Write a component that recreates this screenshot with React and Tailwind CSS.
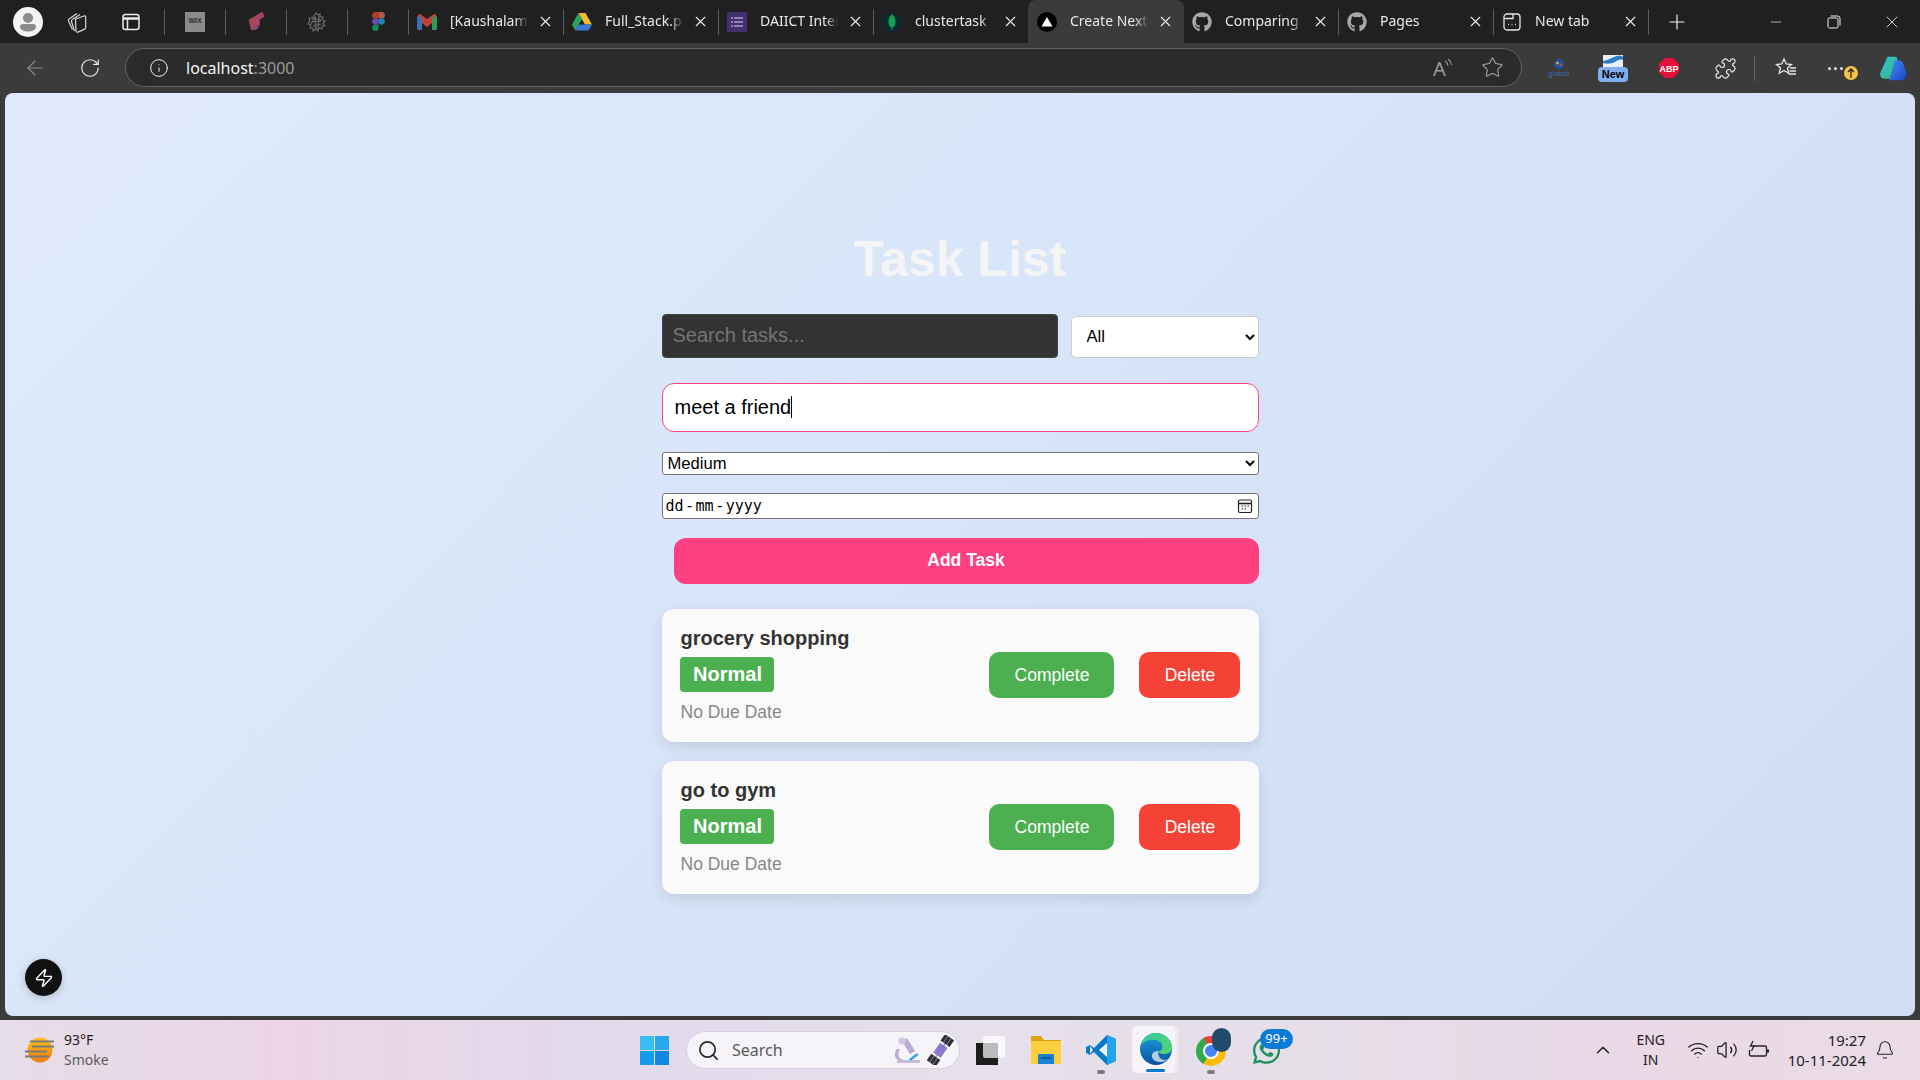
import React from 'react'
import { X, Plus, Minus, ArrowLeft, RotateCw, Info, Star, Puzzle, Bell, Wifi, Volume2, ChevronUp, Search, Zap } from 'lucide-react'
import { FaGithub, FaWhatsapp } from 'react-icons/fa'

const uiFont = "font-['Noto_Sans',sans-serif]"

// tab strip icons
const ProfileIcon = () => (
  <svg width="30" height="30" viewBox="0 0 30 30">
    <circle cx="15" cy="15" r="15" fill="#f4f4f4" />
    <circle cx="15" cy="11" r="5" fill="#8c8c8c" />
    <path d="M7 19.500c0-1.500 1-2.500 2.500-2.500h11c1.500 0 2.500 1 2.500 2.500 0 3.500-3.500 5-8 5s-8-1.500-8-5z" fill="#8c8c8c" />
  </svg>
)

const WorkspacesIcon = () => (
  <svg width="22" height="22" viewBox="0 0 22 22" fill="none" stroke="#d8d8d8" strokeWidth="1.200">
    <path d="M6.500 18.500L2.500 10c-.4-1 0-1.800.8-2.200L11 2.500" />
    <path d="M8.500 20L5.500 10.500c-.3-1 0-1.700.8-2L14 3.500" />
    <path d="M9.500 8l8.500-3c1-.3 1.700.2 1.700 1v10.500c0 .8-.4 1.300-1 1.600l-6.700 3c-1 .4-1.800-.1-2-1z" />
  </svg>
)

const VerticalTabsIcon = () => (
  <svg width="20" height="20" viewBox="0 0 20 20" fill="none" stroke="#ececec" strokeWidth="1.500">
    <rect x="2" y="2.500" width="16" height="15" rx="2.500" />
    <path d="M2 6.500h16" strokeWidth="2.500" />
    <path d="M6.500 6.500v11" />
  </svg>
)

const WixIcon = () => (
  <div className="w-[20px] h-[20px] bg-[#8a8a8a] flex items-center justify-center text-[7px] font-bold text-[#2a2a2a] font-['Liberation_Sans',sans-serif]">
    WIX
  </div>
)

const PinkIcon = () => (
  <svg width="17" height="20" viewBox="0 0 17 20">
    <path d="M1 7.500L13 .500c1-.5 2 0 2.500 1L16 5l-4.500 2.500 .5 5.500-7 5c-1 .5-2 0-2.300-1L1 9.500c-.2-1 0-1.500 0-2z" fill="#a8455f" />
    <path d="M5 17l5-3.500 1 2-4 3z" fill="#6d4a88" />
  </svg>
)

const InkIcon = () => (
  <svg width="20" height="20" viewBox="0 0 20 20" fill="none" stroke="#6e6e6e" strokeWidth="1.100">
    <path d="M9 1l2 2 2-1v3l3 0-1 3 3 1-2 2 2 3-3 0 0 3-3-1-1 3-2-2-3 2v-3l-3 0 1-3-3-1 2-3-1-3 3 0z" />
    <path d="M5 6l9 2M5 10l9-1M6 14l8-2M8 4l1 13M12 4l-1 13M4 12l4-7" />
  </svg>
)

const FigmaIcon = () => (
  <svg width="13" height="19" viewBox="0 0 14 21">
    <path d="M3.500 0H7v7H3.500a3.500 3.500 0 010-7z" fill="#b23f22" />
    <path d="M7 0h3.500a3.500 3.500 0 010 7H7z" fill="#b65c4b" />
    <path d="M3.500 7H7v7H3.500a3.500 3.500 0 010-7z" fill="#7243a8" />
    <circle cx="10.500" cy="10.500" r="3.500" fill="#1c87b0" />
    <path d="M3.500 14H7v3.500a3.500 3.500 0 11-3.500-3.500z" fill="#0d8f5d" />
  </svg>
)

const GmailIcon = () => (
  <svg width="20" height="16" viewBox="0 0 20 16">
    <path d="M0 3l2-2 3 1v14H1.500A1.500 1.500 0 010 14.500z" fill="#3f6fb5" />
    <path d="M20 3l-2-2-3 1v14h3.500a1.500 1.500 0 001.500-1.500z" fill="#2f9a58" />
    <path d="M1 1.500L10 8.500l9-7-.5-1.500-1.500 0L10 5 3 0 1.500 0z" fill="#c5433a" />
    <path d="M5 4l5 4.500L15 4v5l-5 4-5-4z" fill="#c5433a" />
  </svg>
)

const DriveIcon = () => (
  <svg width="20" height="18" viewBox="0 0 20 18">
    <path d="M6.500 0h7L20 11.500h-7z" fill="#f2bb2c" />
    <path d="M6.500 0L0 11.500 3.300 17.500 10 6z" fill="#2da160" />
    <path d="M3.300 17.500h13.400l3.300-6H6.700z" fill="#3d78d8" />
  </svg>
)

const FormsIcon = () => (
  <div className="w-[20px] h-[20px] bg-[#43306f] flex flex-col justify-center gap-[2px] px-[4px]">
    {[0, 1, 2].map(i => (
      <div key={i} className="flex gap-[1px]">
        <div className="w-[2px] h-[2px] bg-[#8f83ad]" />
        <div className="flex-1 h-[2px] bg-[#8f83ad]" />
      </div>
    ))}
  </div>
)

const MongoIcon = () => (
  <svg width="20" height="20" viewBox="0 0 20 20">
    <circle cx="10" cy="10" r="10" fill="#0c2a2f" />
    <path d="M10 2c3 3 4 6 3.500 9-.3 2-1.500 3.500-3 4.500V18h-1v-2.500c-1.500-1-2.700-2.500-3-4.500C6 8 7 5 10 2z" fill="#12a150" />
  </svg>
)

const NextIcon = () => (
  <svg width="20" height="20" viewBox="0 0 20 20">
    <circle cx="10" cy="10" r="10" fill="#000" />
    <path d="M10 5l5.500 9.500h-11z" fill="#fff" />
  </svg>
)

const GithubIcon = () => <FaGithub size={20} color="#a8a8a8" />

const NewTabIcon = () => (
  <svg width="20" height="20" viewBox="0 0 20 20" fill="none" stroke="#e6e6e6" strokeWidth="1.300">
    <rect x="2" y="2" width="16" height="16" rx="3" />
    <path d="M2 6.500h9V2" />
    <path d="M6 12.500h.8M9.600 12.500h.8M13.200 12.500h.8" strokeWidth="1.700" />
  </svg>
)

const Separator = () => <div className="w-px h-[26px] bg-[#5c5c5c] shrink-0" />

const PinnedTab = ({ children }) => (
  <div className="w-[60px] h-full flex items-center justify-center shrink-0">{children}</div>
)

const Tab = ({ icon, title, active }) => (
  <div className={active
    ? 'relative w-[156px] h-full flex items-center pl-[9px] shrink-0 bg-[#3b3b3b] rounded-t-lg'
    : 'w-[154px] h-full flex items-center pl-[8px] shrink-0'}
  >
    <div className="w-[20px] flex items-center justify-center shrink-0">{icon}</div>
    <div className="ml-[13px] -mt-[2px] w-[80px] overflow-hidden whitespace-nowrap text-[14px] leading-[20px] text-[#e8e8e8] [mask-image:linear-gradient(to_right,black_82%,transparent_98%)]">
      {title}
    </div>
    <X size={17} strokeWidth={1.500} color="#f0f0f0" className="ml-[7px] shrink-0" />
  </div>
)

const TabBar = () => (
  <div className={`h-[43px] shrink-0 bg-[#202020] flex items-center ${uiFont}`}>
    <div className="w-[56px] flex justify-center shrink-0"><ProfileIcon /></div>
    <div className="w-[42px] flex justify-center shrink-0"><WorkspacesIcon /></div>
    <div className="w-[66px] flex justify-center shrink-0"><VerticalTabsIcon /></div>
    <Separator />
    <PinnedTab><WixIcon /></PinnedTab>
    <Separator />
    <PinnedTab><PinkIcon /></PinnedTab>
    <Separator />
    <PinnedTab><InkIcon /></PinnedTab>
    <Separator />
    <PinnedTab><FigmaIcon /></PinnedTab>
    <Separator />
    <Tab icon={<GmailIcon />} title="[Kaushalam] Inbox" />
    <Separator />
    <Tab icon={<DriveIcon />} title="Full_Stack.pdf" />
    <Separator />
    <Tab icon={<FormsIcon />} title="DAIICT Internship" />
    <Separator />
    <Tab icon={<MongoIcon />} title="clustertask | Data" />
    <Tab icon={<NextIcon />} title="Create Next App" active />
    <Tab icon={<GithubIcon />} title="Comparing main" />
    <Separator />
    <Tab icon={<GithubIcon />} title="Pages" />
    <Separator />
    <Tab icon={<NewTabIcon />} title="New tab" />
    <Separator />
    <div className="w-[56px] flex justify-center shrink-0">
      <Plus size={24} strokeWidth={1.200} color="#f0f0f0" />
    </div>
    <div className="ml-auto flex items-center">
      <div className="w-[58px] flex justify-center"><Minus size={16} strokeWidth={1} color="#f0f0f0" /></div>
      <div className="w-[58px] flex justify-center">
        <svg width="14" height="14" viewBox="0 0 14 14" fill="none" stroke="#f0f0f0" strokeWidth="1">
          <rect x="1" y="3" width="10" height="10" rx="1.500" />
          <path d="M3.500 1h7a2.500 2.500 0 012.500 2.500v7" />
        </svg>
      </div>
      <div className="w-[57px] flex justify-center"><X size={20} strokeWidth={1} color="#f0f0f0" /></div>
    </div>
  </div>
)

// toolbar icons
const ReadAloudIcon = () => (
  <svg width="24" height="24" viewBox="0 0 24 24" fill="none" stroke="#9a9a9a" strokeWidth="1.100">
    <text x="2" y="20" fontSize="20" fill="#9a9a9a" stroke="none" fontFamily="Noto Sans">A</text>
    <path d="M14 5c1.500 1 2.500 2.500 3 4.500M17 3c2 1.500 3.300 3.500 3.800 6" />
  </svg>
)

const GrabzitIcon = () => (
  <div className="flex flex-col items-center w-[32px]">
    <svg width="10" height="10" viewBox="0 0 10 10">
      <circle cx="5" cy="5" r="5" fill="#24539c" />
      <circle cx="3.500" cy="4" r="1.300" fill="#e5b92e" />
      <circle cx="6.500" cy="6" r="1.300" fill="#c4473a" />
    </svg>
    <span className="text-[7px] leading-[9px] text-[#3f6ab0] font-['Liberation_Sans',sans-serif]">grabzit</span>
  </div>
)

const NewExtensionIcon = () => (
  <div className="flex flex-col items-center w-[30px]">
    <svg width="20" height="13" viewBox="0 0 20 13">
      <rect width="20" height="13" fill="#e8f1fa" />
      <path d="M0 6c6-1 10-4 14-5 3-.5 5 0 6 1v3c-3-1-5 0-8 2-4 2-8 2-12 1z" fill="#2d7cc4" />
    </svg>
    <div className="w-[30px] h-[15px] -mt-[1px] rounded-[4px] bg-[#82aef0] flex items-center justify-center text-[11px] font-bold text-black font-['Liberation_Sans',sans-serif]">
      New
    </div>
  </div>
)

const AbpIcon = () => (
  <svg width="20" height="20" viewBox="0 0 20 20">
    <path d="M6 0h8l6 6v8l-6 6H6l-6-6V6z" fill="#e8103a" />
    <text x="10" y="13.500" textAnchor="middle" fontSize="9" fontWeight="700" fill="#fff" fontFamily="Liberation Sans">ABP</text>
  </svg>
)

const FavouritesIcon = () => (
  <svg width="22" height="22" viewBox="0 0 22 22" fill="none" stroke="#e6e6e6" strokeWidth="1.300">
    <path d="M9 2l2.300 5 5.200.5-4 3.500 1.200 5.200L9 13.500 4.300 16.200 5.500 11l-4-3.500L6.700 7z" />
    <path d="M15 11h6M14.500 14h6.500M13.500 17h7.500" />
  </svg>
)

const MoreIcon = () => (
  <div className="relative w-[24px] h-[24px] flex items-center">
    <div className="flex gap-[3px]">
      <div className="w-[3px] h-[3px] rounded-full bg-[#e6e6e6]" />
      <div className="w-[3px] h-[3px] rounded-full bg-[#e6e6e6]" />
      <div className="w-[3px] h-[3px] rounded-full bg-[#e6e6e6]" />
    </div>
    <div className="absolute left-[16px] top-[10px] w-[14px] h-[14px] rounded-full bg-[#f6c445] flex items-center justify-center">
      <svg width="8" height="10" viewBox="0 0 8 10" fill="none" stroke="#222" strokeWidth="1.300">
        <path d="M4 10V1M1 4l3-3 3 3" />
      </svg>
    </div>
  </div>
)

const CopilotIcon = () => (
  <svg width="30" height="27" viewBox="0 0 32 30">
    <defs>
      <linearGradient id="copA" x1="0" y1="0" x2="1" y2="1">
        <stop offset="0" stopColor="#27c4e8" />
        <stop offset="1" stopColor="#3fb56a" />
      </linearGradient>
      <linearGradient id="copB" x1="0" y1="0" x2="1" y2="1">
        <stop offset="0" stopColor="#3f8df0" />
        <stop offset="1" stopColor="#1a46c8" />
      </linearGradient>
    </defs>
    <path d="M10 2h8c1.500 0 2.500 1 3 2.500L15 25c-.5 1-1 1.500-2 1.500H7c-4 0-6-3-5-7z" fill="url(#copA)" />
    <path d="M18 6h5c2 0 3.500 1 4 3l4 11c.5 4-2 8-6 8H14c-1.500 0-2-1-1.500-2.500z" fill="url(#copB)" />
  </svg>
)

const Toolbar = () => (
  <div className={`h-[50px] shrink-0 bg-[#3b3b3b] flex items-center ${uiFont}`}>
    <div className="w-[70px] flex justify-center shrink-0"><ArrowLeft size={24} strokeWidth={1.100} color="#8b8b8b" /></div>
    <div className="w-[40px] flex justify-center shrink-0"><RotateCw size={22} strokeWidth={1.300} color="#eeeeee" /></div>
    <div className="ml-[15px] w-[1397px] h-[39px] -mt-[1px] shrink-0 bg-[#2b2b2b] border border-[#636363] rounded-full flex items-center">
      <div className="w-[60px] pl-[7px] flex justify-center shrink-0 -ml-[1px]"><Info size={20} strokeWidth={1.200} color="#f0f0f0" /></div>
      <div className="ml-[1px] text-[16px] leading-none text-[#f4f4f4]">
        localhost<span className="text-[#9c9c9c]">:3000</span>
      </div>
      <div className="ml-auto flex items-center pr-[14px]">
        <div className="w-[69px] flex justify-center"><ReadAloudIcon /></div>
        <div className="w-[30px] flex justify-center"><Star size={23} strokeWidth={1.100} color="#a8a8a8" /></div>
      </div>
    </div>
    <div className="w-[21px] shrink-0" />
    <div className="w-[32px] flex justify-center shrink-0"><GrabzitIcon /></div>
    <div className="ml-[22px] w-[32px] flex justify-center shrink-0"><NewExtensionIcon /></div>
    <div className="ml-[24px] w-[32px] flex justify-center shrink-0"><AbpIcon /></div>
    <div className="ml-[24px] w-[32px] flex justify-center shrink-0"><Puzzle size={23} strokeWidth={1.200} color="#eeeeee" /></div>
    <div className="ml-[13px] w-px h-[25px] bg-[#666666] shrink-0" />
    <div className="ml-[15px] w-[32px] flex justify-center shrink-0"><FavouritesIcon /></div>
    <div className="ml-[22px] w-[32px] flex justify-center shrink-0"><MoreIcon /></div>
    <div className="ml-[21px] w-[32px] flex justify-center shrink-0"><CopilotIcon /></div>
  </div>
)

// the task list page
const TaskCard = ({ title }) => (
  <div className="flex items-center justify-between bg-[#fafafa] rounded-[12px] pl-[18px] pr-[19px] pt-[18px] pb-[20px] mb-[19px] shadow-[0_5px_14px_rgba(0,0,0,0.1)]">
    <div>
      <div className="ml-[1px] text-[20px] leading-[23px] font-bold text-[#333333]">{title}</div>
      <div className="mt-[7px] w-[94px] h-[35px] pl-[2px] pb-[2px] rounded-[4px] bg-[#4caf50] flex items-center justify-center text-[20px] font-bold text-white">
        Normal
      </div>
      <div className="ml-[1px] mt-[10px] text-[17.500px] leading-[20px] text-[#888888]">No Due Date</div>
    </div>
    <div className="flex items-center gap-[25px]">
      <button className="w-[125px] h-[46px] pl-[2px] pt-[2px] rounded-[10px] bg-[#4caf50] text-[17.500px] text-white">Complete</button>
      <button className="w-[101px] h-[46px] pl-[2px] pt-[2px] rounded-[10px] bg-[#f44336] text-[17.500px] text-white">Delete</button>
    </div>
  </div>
)

const TaskPage = () => (
  <div className="relative flex-1 min-h-0 rounded-[8px] bg-[linear-gradient(135deg,#e0eafc,#cfdef3)] pt-[138px] font-['Liberation_Sans',sans-serif]">
    <div className="w-[597px] mx-auto">
      <h1 className="text-[50px] leading-[56px] font-bold text-center text-[#f5f5f5]">Task List</h1>

      <div className="mt-[27px] flex items-end justify-between">
        <input
          readOnly
          placeholder="Search tasks..."
          className="w-[396px] h-[44px] px-[10px] pb-[2px] rounded-[4px] bg-[#333333] border border-[#444444] text-[20px] text-white placeholder:text-[#757575] outline-none"
        />
        <select defaultValue="All" className="w-[188px] h-[42px] pl-[11px] pr-[3px] pb-[2px] rounded-[5px] bg-white border border-[#cccccc] text-[16.600px] text-black outline-none">
          <option>All</option>
          <option>Normal</option>
        </select>
      </div>

      <div className="mt-[25px] h-[49px] pb-[2px] rounded-[12px] bg-white border border-[#ff4081] pl-[12px] flex items-center text-[20px] text-black">
        <span>meet a friend</span>
        <span className="w-px h-[22px] bg-black" />
      </div>

      <select defaultValue="Medium" className="block mt-[20px] w-full h-[23px] pl-[1px] pr-[3px] rounded-[3px] bg-white border border-[#767676] text-[16.600px] text-black outline-none">
        <option>Low</option>
        <option>Medium</option>
        <option>High</option>
      </select>

      <div className="mt-[18px] h-[26px] rounded-[3px] bg-white border border-[#767676] pl-[3px] pr-[5px] flex items-center justify-between text-black">
        <span className="flex gap-[1.500px] text-[15px] font-['DejaVu_Sans_Mono',monospace]"><span>dd</span><span>-</span><span>mm</span><span>-</span><span>yyyy</span></span>
        <svg width="16" height="16" viewBox="0 0 16 16" fill="none" stroke="#222" strokeWidth="1.200">
          <rect x="1.500" y="2" width="13" height="12.500" rx="1.500" />
          <path d="M1.500 5.500h13" strokeWidth="1.600" />
          <path d="M4.500 8h1.500M7.500 8H9M10.500 8H12M4.500 11h1.500M7.500 11H9" />
        </svg>
      </div>

      <button className="block mt-[19px] ml-[12px] w-[585px] h-[46px] pb-[2px] rounded-[12px] bg-[#ff4081] text-[17.500px] font-bold text-white">
        Add Task
      </button>

      <div className="mt-[25px]">
        <TaskCard title="grocery shopping" />
        <TaskCard title="go to gym" />
      </div>
    </div>

    {/* next dev indicator */}
    <div className="absolute left-[20px] bottom-[20px] w-[37px] h-[37px] rounded-full bg-[#111111] flex items-center justify-center shadow-[0_2px_10px_rgba(0,0,0,0.2)]">
      <Zap size={20} strokeWidth={1.700} color="#ffffff" />
    </div>
  </div>
)

// taskbar icons
const WeatherIcon = () => (
  <svg width="32" height="28" viewBox="0 0 32 28">
    <defs>
      <linearGradient id="sun" x1="0" y1="0" x2="0" y2="1">
        <stop offset="0" stopColor="#fdc11c" />
        <stop offset="1" stopColor="#ee7d08" />
      </linearGradient>
    </defs>
    <circle cx="16" cy="14" r="12.500" fill="url(#sun)" />
    <path d="M6 5.500h24M8 10.500h22M1 15.500h22M1 20.500h24" stroke="#7a7a7a" strokeWidth="2.200" />
  </svg>
)

const WindowsIcon = () => (
  <div className="grid grid-cols-2 gap-[1px] w-[29px] h-[29px]">
    <div className="bg-[#38bdf4]" />
    <div className="bg-[#26a9ef]" />
    <div className="bg-[#159bec]" />
    <div className="bg-[#0f88e3]" />
  </div>
)

const MicroscopeIcon = () => (
  <svg width="28" height="28" viewBox="0 0 28 28">
    <path d="M9 5l5-3 8 13-5 3z" fill="#b9abd2" />
    <circle cx="9" cy="5" r="3.500" fill="#cfc7e2" />
    <path d="M4 24h23v3H4z" fill="#c5bbdc" />
    <path d="M7 13c-3 4-2 10 4 11H5c-4-2-4-8-1-11z" fill="#b9abd2" />
    <path d="M16 23l8-6 1.500 2-8 6z" fill="#3aa5e8" />
  </svg>
)

const SatelliteIcon = () => (
  <svg width="28" height="30" viewBox="0 0 28 30">
    <g transform="rotate(35 14 15)">
      <rect x="10" y="9" width="9" height="12" fill="#8b78c9" />
      <rect x="9" y="-1" width="11" height="8" fill="#2f2f3a" />
      <rect x="9" y="23" width="11" height="8" fill="#2f2f3a" />
      <path d="M14.500 7v2M14.500 21v2M12.500 -1v8M16.500 -1v8M12.500 23v8M16.500 23v8" stroke="#7d7d90" strokeWidth="1" />
    </g>
  </svg>
)

const TaskViewIcon = () => (
  <div className="relative w-[29px] h-[29px]">
    <div className="absolute left-0 bottom-0 w-[22px] h-[22px] bg-[#1d1d1d]" />
    <div className="absolute right-0 top-0 w-[22px] h-[22px] bg-white/70 rounded-[2px]" />
  </div>
)

const ExplorerIcon = () => (
  <svg width="30" height="30" viewBox="0 0 30 30">
    <path d="M0 2c0-.5.500-1 1-1h9l3 4h17v3H0z" fill="#e0a20f" />
    <path d="M0 6h29c.5 0 1 .5 1 1v21c0 .5-.5 1-1 1H1c-.5 0-1-.5-1-1z" fill="#fbcf3f" />
    <path d="M7 20c0-.5.500-1 1-1h14c.5 0 1 .5 1 1v9H7z" fill="#1a82d4" />
    <path d="M10 23h10" stroke="#0d4f92" strokeWidth="1.500" />
  </svg>
)

const VsCodeIcon = () => (
  <svg width="30" height="30" viewBox="0 0 30 30">
    <path d="M21 0l9 4v22l-9 4L8 17l-4 3-4-2v-6l4-2 4 3z" fill="#0a7ac8" />
    <path d="M21 0l9 4v22l-9 4z" fill="#22a3ee" />
    <path d="M21 8v14l-8-7z" fill="#eef1f5" />
    <path d="M4 11l3 4-3 4z" fill="#eef1f5" />
  </svg>
)

const EdgeIcon = () => (
  <svg width="32" height="32" viewBox="0 0 32 32">
    <defs>
      <linearGradient id="edgeA" x1="0" y1="0" x2="1" y2="1">
        <stop offset="0" stopColor="#34c7a4" />
        <stop offset="1" stopColor="#58d66a" />
      </linearGradient>
      <linearGradient id="edgeB" x1="0" y1="0" x2="0" y2="1">
        <stop offset="0" stopColor="#1aa4e0" />
        <stop offset="1" stopColor="#0a4f9e" />
      </linearGradient>
    </defs>
    <circle cx="16" cy="16" r="16" fill="url(#edgeB)" />
    <path d="M1 12C3 4 9 0 16 0c9 0 16 7 16 14 0 5-4 7-8 7-3 0-6-1-6-3 3 0 5-2 4-6C21 6 7 4 1 12z" fill="url(#edgeA)" />
    <path d="M18 18c-3 0-7 2-6 6 .8 3 4 5 9 5 3 0 5-1 7-3-4 2-10 1-10-8z" fill="#e9eef4" opacity="0.750" />
  </svg>
)

const ChromeIcon = () => (
  <div className="relative w-[30px] h-[32px]">
    <div className="absolute left-0 bottom-0 w-[30px] h-[30px] rounded-full bg-[conic-gradient(from_-30deg,#ea4335_0deg_120deg,#fbbc05_120deg_240deg,#34a853_240deg_360deg)] flex items-center justify-center">
      <div className="w-[16px] h-[16px] rounded-full bg-[#4285f4] border-[2px] border-white" />
    </div>
    <div className="absolute left-[16px] -top-[6px] w-[19px] h-[24px] rounded-full bg-[#23496b]" />
  </div>
)

const Taskbar = () => (
  <div className={`h-[60px] shrink-0 flex items-center bg-[linear-gradient(90deg,#e5dde8,#ecd5e5_15%,#e2d9ec_30%,#e6e0ec_50%,#e4dfe8_65%,#ead8e6_85%,#ebdce6)] ${uiFont}`}>
    <div className="w-[640px] shrink-0 flex items-center pl-[24px]">
      <WeatherIcon />
      <div className="ml-[8px] text-[14px] leading-[20px]">
        <div className="text-[#1c1c1c]">93°F</div>
        <div className="text-[#5c5c5c]">Smoke</div>
      </div>
    </div>

    <WindowsIcon />
    <div className="ml-[17px] w-[274px] h-[38px] rounded-full bg-[#f6f3f9] border border-[#d6cfe0] flex items-center shrink-0">
      <Search size={23} strokeWidth={1.800} color="#2a2a2a" className="ml-[10px]" />
      <span className="ml-[12px] text-[16px] leading-none text-[#5a5a5a]">Search</span>
      <div className="ml-auto flex items-center pr-[5px]">
        <MicroscopeIcon />
        <div className="ml-[5px]"><SatelliteIcon /></div>
      </div>
    </div>
    <div className="ml-[16px]"><TaskViewIcon /></div>
    <div className="ml-[26px]"><ExplorerIcon /></div>
    <div className="relative ml-[25px]">
      <VsCodeIcon />
      <div className="absolute left-[11px] -bottom-[9px] w-[8px] h-[4px] rounded-full bg-[#7c7c7c]" />
    </div>
    <div className="relative ml-[16px] w-[43px] h-[47px] rounded-[5px] bg-[#f6f3f9] flex items-center justify-center -translate-y-[1px] shadow-[3px_0_0_rgba(246,243,249,0.6)]">
      <div className="ml-[4px]"><EdgeIcon /></div>
      <div className="absolute left-[14px] bottom-[1px] w-[19px] h-[3px] rounded-full bg-[#0078d4]" />
    </div>
    <div className="relative ml-[21px]">
      <ChromeIcon />
      <div className="absolute left-[11px] -bottom-[8px] w-[8px] h-[4px] rounded-full bg-[#7c7c7c]" />
    </div>
    <div className="relative ml-[25px]">
      <FaWhatsapp size={31} color="#1f9160" />
      <div className="absolute left-[9px] -top-[6px] w-[33px] h-[20px] rounded-full bg-[#0c7ad6] flex items-center justify-center text-[13px] leading-none text-white">
        99+
      </div>
    </div>

    <div className="ml-auto flex items-center pr-[25px]">
      <ChevronUp size={22} strokeWidth={1.600} color="#222222" />
      <div className="ml-[12px] w-[50px] text-center text-[14px] leading-[20px] text-[#222222]">
        <div>ENG</div>
        <div>IN</div>
      </div>
      <div className="ml-[11px]"><Wifi size={22} strokeWidth={1.500} color="#222222" /></div>
      <div className="ml-[7px]"><Volume2 size={22} strokeWidth={1.400} color="#222222" /></div>
      <div className="ml-[10px]">
        <svg width="22" height="20" viewBox="0 0 22 20" fill="none" stroke="#222" strokeWidth="1.300">
          <path d="M5 6H17c1 0 1.500.5 1.500 1.500v7c0 1-.5 1.500-1.500 1.500H3c-1 0-1.500-.5-1.500-1.500V10" />
          <path d="M20 9.500v3" strokeWidth="2" />
          <path d="M5 1L2.500 6h3.500L3.500 11" />
        </svg>
      </div>
      <div className="ml-[18px] text-right text-[15px] leading-[20px] text-[#222222]">
        <div>19:27</div>
        <div>10-11-2024</div>
      </div>
      <div className="ml-[9px]"><Bell size={20} strokeWidth={1.300} color="#222222" /></div>
    </div>
  </div>
)

const App = () => (
  <div className="w-[1920px] h-[1080px] flex flex-col overflow-hidden bg-[#3b3b3b]">
    <TabBar />
    <Toolbar />
    <div className="flex-1 min-h-0 flex flex-col px-[5px] pb-[4px]">
      <TaskPage />
    </div>
    <Taskbar />
  </div>
)

export default App
